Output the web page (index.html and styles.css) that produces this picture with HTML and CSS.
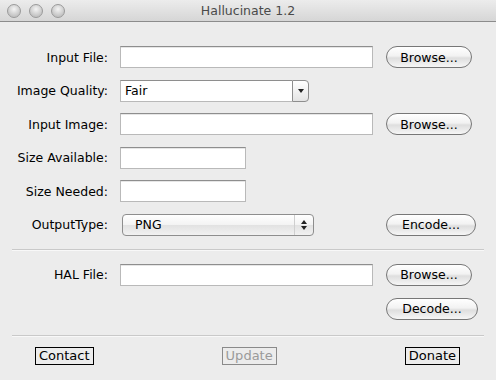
FILE: index.html
```html
<!DOCTYPE html>
<html lang="en">
<head>
  <meta charset="UTF-8" />
  <title>Hallucinate 1.2</title>
  <link rel="stylesheet" href="styles.css">
</head>
<body>
  <div class="window">
    <div class="titlebar">
      <div class="lights">
        <span class="light"></span>
        <span class="light"></span>
        <span class="light"></span>
      </div>
      <div class="title">Hallucinate 1.2</div>
    </div>

    <div class="form">
      <label class="label">Input File:</label>
      <div class="field wide"></div>
      <button class="aqua">Browse...</button>

      <label class="label">Image Quality:</label>
      <div class="combo">
        <span class="combo-text">Fair</span>
        <span class="combo-btn"><span class="down"></span></span>
      </div>
      <span></span>

      <label class="label">Input Image:</label>
      <div class="field wide"></div>
      <button class="aqua">Browse...</button>

      <label class="label">Size Available:</label>
      <div class="field short"></div>
      <span></span>

      <label class="label">Size Needed:</label>
      <div class="field short"></div>
      <span></span>

      <label class="label">OutputType:</label>
      <div class="popup">
        <span class="popup-text">PNG</span>
        <span class="popup-arrows"><span class="up"></span><span class="down"></span></span>
      </div>
      <button class="aqua encode">Encode...</button>
    </div>

    <hr class="sep">

    <div class="form form-hal">
      <label class="label">HAL File:</label>
      <div class="field wide"></div>
      <button class="aqua">Browse...</button>

      <span></span>
      <span></span>
      <button class="aqua decode">Decode...</button>
    </div>

    <hr class="sep sep-low">

    <div class="footer">
      <button class="link">Contact</button>
      <button class="link disabled">Update</button>
      <button class="link">Donate</button>
    </div>
  </div>
</body>
</html>
```

FILE: styles.css
```css
body {
  margin: 0;
  background: #ececec;
  font-family: "DejaVu Sans", sans-serif;
  font-size: 12.5px;
  color: #000;
}
.window {
  width: 496px;
  height: 380px;
  background: #ececec;
}
.titlebar {
  height: 21px;
  border-bottom: 1px solid #8c8c8c;
  background: linear-gradient(#ececec, #d6d6d6);
  display: flex;
  align-items: center;
  position: relative;
}
.lights {
  display: flex;
  gap: 8px;
  padding-left: 7px;
}
.light {
  width: 12px;
  height: 12px;
  border-radius: 50%;
  border: 1px solid #9a9a9a;
  background: radial-gradient(circle at 50% 35%, #f4f4f4, #c4c4c4 70%);
}
.title {
  position: absolute;
  left: 0;
  right: 0;
  text-align: center;
  color: #4a4a4a;
  font-size: 12.5px;
  line-height: 21px;
}
.form {
  display: grid;
  grid-template-columns: 108px 253px 1fr;
  grid-auto-rows: 22px;
  row-gap: 11.6px;
  column-gap: 12px;
  padding-top: 24px;
  align-items: center;
}
.label {
  text-align: right;
}
.field {
  height: 20px;
  background: #fff;
  border: 1px solid #b9b9b9;
  border-top-color: #8e8e8e;
  box-shadow: inset 0 1px 0 #e6e6e6;
}
.short {
  width: 124px;
}
.combo {
  width: 189px;
  height: 22px;
  display: flex;
}
.combo-text {
  flex: 1;
  background: #fff;
  border: 1px solid #b9b9b9;
  border-top-color: #8e8e8e;
  border-right: none;
  padding-left: 4px;
  line-height: 20px;
}
.combo-btn {
  width: 15px;
  border: 1px solid #8e8e8e;
  border-radius: 0 4px 4px 0;
  background: linear-gradient(#fff, #e4e4e4);
  display: flex;
  align-items: center;
  justify-content: center;
}
.down, .up {
  width: 0;
  height: 0;
  border-left: 3px solid transparent;
  border-right: 3px solid transparent;
}
.down {
  border-top: 4px solid #222;
}
.up {
  border-bottom: 4px solid #222;
}
.popup {
  margin-left: 2px;
  width: 190px;
  height: 20px;
  border: 1px solid #8e8e8e;
  border-radius: 4px;
  background: linear-gradient(#ffffff, #f3f3f3 50%, #e2e2e2 51%, #f1f1f1);
  display: flex;
  align-items: center;
}
.popup-text {
  flex: 1;
  padding-left: 12px;
}
.popup-arrows {
  width: 18px;
  height: 100%;
  border-left: 1px solid #cfcfcf;
  display: flex;
  flex-direction: column;
  align-items: center;
  justify-content: center;
  gap: 2px;
}
.aqua {
  justify-self: start;
  margin-left: 1px;
  width: 86px;
  height: 22px;
  border: 1px solid #777;
  border-radius: 11px;
  background: linear-gradient(#ffffff, #f2f2f2 45%, #dedede 55%, #f6f6f6);
  font-family: inherit;
  font-size: 12.5px;
  color: #000;
  padding: 0;
}
.encode {
  width: 90px;
}
.decode {
  width: 92px;
}
.sep {
  margin: 13px 12px 0 12px;
  border: none;
  border-top: 1px solid #c9c9c9;
  border-bottom: 1px solid #f8f8f8;
}
.sep-low {
  margin-top: 15px;
}
.form-hal {
  padding-top: 13px;
  row-gap: 12px;
}
.footer {
  display: flex;
  justify-content: space-between;
  padding: 10px 36px 0 35px;
}
.link {
  background: none;
  border: 1px solid #000;
  font-family: inherit;
  font-size: 13px;
  padding: 0 3px;
  height: 18px;
  line-height: 16px;
  color: #000;
}
.disabled {
  color: #9a9a9a;
  border-color: #8a8a8a;
}
```
